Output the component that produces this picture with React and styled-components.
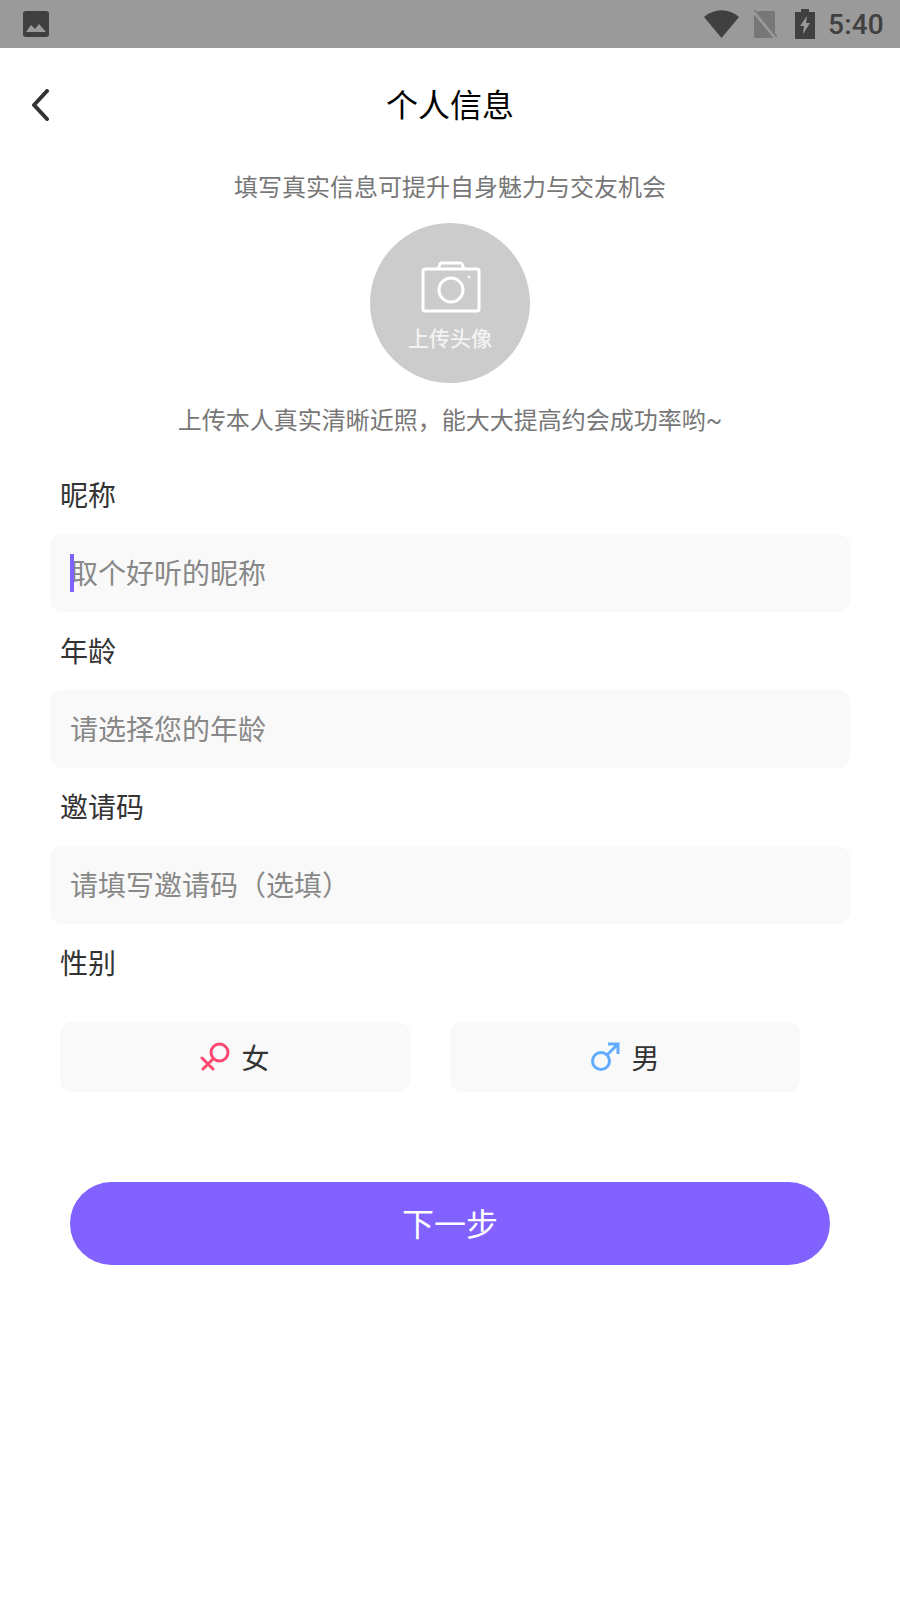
import React from 'react';
import styled, { createGlobalStyle } from 'styled-components';

const GlobalStyle = createGlobalStyle`
    html, body {
        margin: 0;
        padding: 0;
        background: #fff;
    }
    body {
        font-family: "Noto Sans CJK SC", "Noto Sans", sans-serif;
    }
`

const Page = styled.div`
    width: 900px;
    height: 1600px;
    overflow: hidden;
    background: #fff;
`

const StatusBar = styled.div`
    height: 48px;
    background: #9a9a9a;
    display: flex;
    align-items: center;
    justify-content: space-between;
    padding: 0 16px 0 23px;
    box-sizing: border-box;
`

const StatusRight = styled.div`
    display: flex;
    align-items: center;
`

const Clock = styled.span`
    font-family: "Roboto", sans-serif;
    font-weight: 500;
    font-size: 28px;
    color: #404040;
    margin-left: 13px;
    letter-spacing: 0.2px;
`

const Header = styled.div`
    height: 116px;
    padding-bottom: 6px;
    box-sizing: border-box;
    position: relative;
    display: flex;
    align-items: center;
    justify-content: center;
`

const BackButton = styled.svg`
    position: absolute;
    left: 30px;
    top: 41px;
`

const Title = styled.h1`
    margin: 0;
    font-size: 32px;
    font-weight: 400;
    line-height: 46px;
    color: #000;
`

const Intro = styled.div`
    display: flex;
    flex-direction: column;
    align-items: center;
`

const Hint = styled.p`
    margin: 0;
    font-size: 24px;
    line-height: 44px;
    color: #777;
`

const Tilde = styled.span`
    font-family: "Roboto", sans-serif;
    line-height: 1;
`

const Avatar = styled.div`
    width: 160px;
    height: 160px;
    margin: 15px 0 14px;
    border-radius: 50%;
    background: #cccccc;
    display: flex;
    flex-direction: column;
    align-items: center;
    padding-top: 37px;
    box-sizing: border-box;
`

const AvatarText = styled.span`
    font-size: 21px;
    font-weight: 500;
    line-height: 30px;
    margin-top: 8px;
    color: rgba(255, 255, 255, 0.8);
`

const Form = styled.div`
    padding: 15px 50px 0;
`

const Label = styled.div`
    font-size: 28px;
    line-height: 40px;
    height: 78px;
    padding: 18px 0 0 10px;
    box-sizing: border-box;
    color: #333;
`

const Field = styled.div`
    height: 78px;
    border-radius: 12px;
    background: #f9f9f9;
    display: flex;
    align-items: center;
    padding: 0 0 2px 20px;
    box-sizing: border-box;
    font-size: 28px;
    color: #888;
    position: relative;
`

const Caret = styled.i`
    position: absolute;
    left: 20px;
    top: 20px;
    width: 4px;
    height: 38px;
    background: #8162ff;
`

const GenderRow = styled.div`
    display: flex;
    gap: 40px;
    padding: 0 0 0 10px;
    margin-top: 20px;
`

const GenderButton = styled.div`
    width: 350px;
    height: 70px;
    border-radius: 12px;
    background: #f9f9f9;
    display: flex;
    align-items: center;
    justify-content: center;
    gap: 11px;
    font-size: 28px;
    color: #333;
`

const NextButton = styled.div`
    width: 760px;
    height: 83px;
    margin: 90px auto 0;
    padding-bottom: 3px;
    box-sizing: border-box;
    border-radius: 42px;
    background: #8162ff;
    color: #fff;
    font-size: 32px;
    display: flex;
    align-items: center;
    justify-content: center;
`

function ImageIcon() {
    return (
        <svg width="26" height="26" viewBox="0 0 26 26">
            <path d="M3 0h20a3 3 0 0 1 3 3v20a3 3 0 0 1-3 3H3a3 3 0 0 1-3-3V3a3 3 0 0 1 3-3z" fill="#404040" />
            <path d="M3 21l5-7 4 4 4-5 7 8z" fill="#9a9a9a" />
        </svg>
    )
}

function WifiIcon() {
    return (
        <svg width="35" height="28" viewBox="0 0 35 28" style={{ display: 'block' }}>
            <path d="M17.5 28L0 7C10-2 25-2 35 7z" fill="#404040" />
        </svg>
    )
}

function SimIcon() {
    return (
        <svg width="24" height="28" viewBox="0 0 24 28" style={{ display: 'block', marginLeft: 14 }}>
            <path d="M6 1h14a2 2 0 0 1 2 2v23a2 2 0 0 1-2 2H2a1 1 0 0 1-1-1V6z" fill="#777" />
            <path d="M0 0L23 28" stroke="#9a9a9a" strokeWidth="4" />
            <path d="M1-1L24 27" stroke="#777" strokeWidth="1.5" />
        </svg>
    )
}

function BatteryIcon() {
    return (
        <svg width="20" height="30" viewBox="0 0 20 30" style={{ display: 'block', marginLeft: 18 }}>
            <path d="M6 0h8v3h6v27H0V3h6z" fill="#404040" />
            <path d="M12 7L5 17h4l-1 8 7-11h-4z" fill="#9a9a9a" />
        </svg>
    )
}

function CameraIcon() {
    return (
        <svg width="60" height="54" viewBox="0 0 60 54" fill="none" stroke="#fff" strokeWidth="3" style={{ flexShrink: 0, marginLeft: 2 }}>
            <rect x="2" y="9" width="56" height="42" rx="2" />
            <path d="M17 9l2-5a2 2 0 0 1 2-1h18a2 2 0 0 1 2 1l2 5" />
            <circle cx="30" cy="30" r="12" />
            <circle cx="48" cy="17" r="1" fill="#fff" strokeWidth="1" />
        </svg>
    )
}

function FemaleIcon() {
    return (
        <svg width="30" height="30" viewBox="0 0 30 30" fill="none" stroke="#ff4870" strokeWidth="3" strokeLinecap="round">
            <circle cx="19.5" cy="10.5" r="8.5" />
            <path d="M13 17L3 27M2 16l11 11" />
        </svg>
    )
}

function MaleIcon() {
    return (
        <svg width="30" height="30" viewBox="0 0 30 30" fill="none" stroke="#62acff" strokeWidth="3">
            <circle cx="11" cy="19" r="8.5" />
            <path d="M17 13L28 2M18 2h10v10" />
        </svg>
    )
}

export default function App() {
    return (
        <Page>
            <GlobalStyle />
            <StatusBar>
                <ImageIcon />
                <StatusRight>
                    <WifiIcon />
                    <SimIcon />
                    <BatteryIcon />
                    <Clock>5:40</Clock>
                </StatusRight>
            </StatusBar>
            <Header>
                <BackButton width="22" height="32" viewBox="0 0 22 32" fill="none" stroke="#333" strokeWidth="4" strokeLinecap="round">
                    <path d="M17 2L4 16l13 14" strokeLinejoin="round" />
                </BackButton>
                <Title>个人信息</Title>
            </Header>
            <Intro>
                <Hint>填写真实信息可提升自身魅力与交友机会</Hint>
                <Avatar>
                    <CameraIcon />
                    <AvatarText>上传头像</AvatarText>
                </Avatar>
                <Hint>上传本人真实清晰近照，能大大提高约会成功率哟<Tilde>~</Tilde></Hint>
            </Intro>
            <Form>
                <Label>昵称</Label>
                <Field><Caret />取个好听的昵称</Field>
                <Label>年龄</Label>
                <Field>请选择您的年龄</Field>
                <Label>邀请码</Label>
                <Field>请填写邀请码（选填）</Field>
                <Label>性别</Label>
                <GenderRow>
                    <GenderButton><FemaleIcon />女</GenderButton>
                    <GenderButton><MaleIcon />男</GenderButton>
                </GenderRow>
            </Form>
            <NextButton>下一步</NextButton>
        </Page>
    )
}
